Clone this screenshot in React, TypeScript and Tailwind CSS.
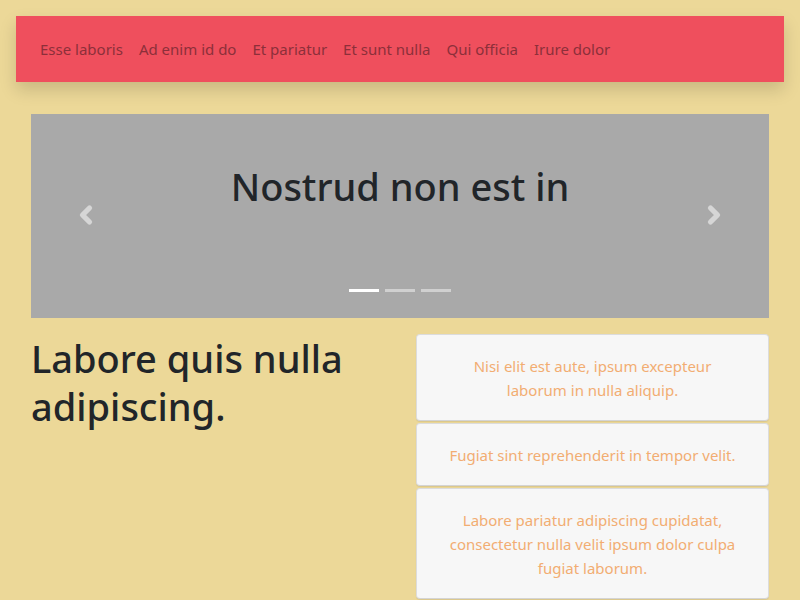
import { ChevronLeft, ChevronRight } from 'lucide-react'

const links = ['Esse laboris', 'Ad enim id do', 'Et pariatur', 'Et sunt nulla', 'Qui officia', 'Irure dolor']

const cards = [
  'Nisi elit est aute, ipsum excepteur laborum in nulla aliquip.',
  'Fugiat sint reprehenderit in tempor velit.',
  'Labore pariatur adipiscing cupidatat, consectetur nulla velit ipsum dolor culpa fugiat laborum.',
]

export default function App() {
  return (
    <div
      className="min-h-[600px] bg-[#ecd898] pt-4 text-[#212529]"
      style={{ fontFamily: '"Noto Sans", "Open Sans", sans-serif' }}
    >
      {/* Navbar */}
      <nav className="mx-4 flex h-[66px] items-center bg-[#ef4f5d] px-4 shadow-[0_8px_16px_rgba(0,0,0,0.15)]">
        {links.map(l => (
          <a key={l} className="px-2 text-[15px] leading-6 text-[#8c2f3a]">
            {l}
          </a>
        ))}
      </nav>

      <div className="px-[31px] pt-8">
        {/* Carousel */}
        <div className="relative flex h-[204px] flex-col items-center bg-[#a9a9a9]">
          <h2 className="mt-[48px] text-[38px] font-medium leading-[48px]">Nostrud non est in</h2>
          <ChevronLeft className="absolute left-[41px] top-[87px] h-7 w-7 text-[#d6d6d6]" strokeWidth={4.5} />
          <ChevronRight className="absolute right-[41px] top-[87px] h-7 w-7 text-[#d6d6d6]" strokeWidth={4.5} />
          <div className="absolute bottom-[26px] flex gap-[6px]">
            <span className="h-[3px] w-[30px] bg-white" />
            <span className="h-[3px] w-[30px] bg-[#d0d0d0]" />
            <span className="h-[3px] w-[30px] bg-[#d0d0d0]" />
          </div>
        </div>

        {/* Content */}
        <div className="mt-4 flex gap-4">
          <div className="flex-1">
            <h1 className="text-[38px] font-medium leading-[48px]">Labore quis nulla adipiscing.</h1>
          </div>
          <div className="flex w-[353px] flex-col gap-[2px]">
            {cards.map(c => (
              <div
                key={c}
                className="rounded-[4px] border border-[#dcdcdc] border-b-[#d4d4d4] bg-[#f7f7f7] px-8 pt-[19px] pb-[18px] text-center text-[15px] leading-6 text-[#f2ad72] shadow-[0_1px_1px_rgba(0,0,0,0.08)]"
              >
                {c}
              </div>
            ))}
          </div>
        </div>
      </div>
    </div>
  )
}
